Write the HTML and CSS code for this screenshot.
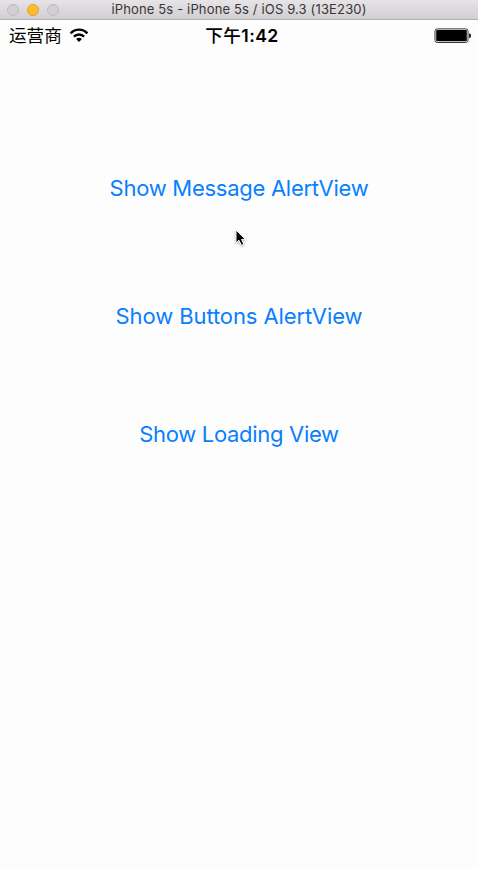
FILE: index.html
```html
<!DOCTYPE html>
<html lang="zh-CN">
<head>
<meta charset="utf-8">
<title>iPhone 5s</title>
<link rel="stylesheet" href="styles.css">
</head>
<body>
<header class="titlebar">
  <div class="lights"><i class="light"></i><i class="light light-min"></i><i class="light"></i></div>
  <div class="title">iPhone 5s - iPhone 5s / iOS 9.3 (13E230)</div>
</header>
<div class="status">
  <div class="carrier"><span>运营商</span>
    <svg class="wifi" width="20" height="16" viewBox="0 0 20 16">
      <g fill="none" stroke="#000" stroke-width="2.4">
        <path d="M1.6 5.4C6.3 .4 13.7 .4 18.4 5.4"/>
        <path d="M4.9 8.7C7.8 5.7 12.2 5.7 15.1 8.7"/>
      </g>
      <path d="M7.1 11Q10 8.6 12.9 11L10 14Z"/>
    </svg>
  </div>
  <div class="time"><span class="period">下午</span>1:42</div>
  <svg class="battery" width="38" height="16" viewBox="0 0 38 16">
    <rect x="1" y=".9" width="33" height="13.6" rx="2.2" fill="#fff" stroke="#333" stroke-width="1"/>
    <rect x="2.2" y="2.1" width="30.6" height="11.2" rx="1"/>
    <path d="M35.2 5.2Q37 5.6 37 7.7T35.2 10.2Z"/>
  </svg>
</div>
<main class="actions">
  <button class="action label-message">Show Message AlertView</button>
  <button class="action label-buttons">Show Buttons AlertView</button>
  <button class="action label-loading">Show Loading View</button>
</main>
<svg class="cursor" width="16" height="20" viewBox="0 0 16 20">
  <path class="cursor-shape" d="M2 2V15L5 12.3L7.4 17.3L9.8 16.2L7.5 11.4H11.5Z"/>
</svg>
</body>
</html>
```
FILE: styles.css
```css
* { box-sizing: border-box; }
body {
  margin: 0;
  width: 478px;
  height: 869px;
  overflow: hidden;
  background: #fdfdfd;
  font-family: Inter, "Noto Sans CJK SC", sans-serif;
}
.titlebar {
  height: 20px;
  display: grid;
  grid-template-columns: 60px 1fr 60px;
  align-items: center;
  background: linear-gradient(#e6e4e6, #d1cfd1);
  border-bottom: 1px solid #b3b0b3;
}
.lights { display: flex; gap: 8px; padding-left: 7px; }
.light {
  flex: none;
  width: 12px;
  height: 12px;
  border-radius: 50%;
  background: #d2d0d2;
  border: 1px solid #bcb9bc;
}
.light-min { background: #fdbe2e; border-color: #e0a028; }
.title {
  text-align: center;
  font-size: 13px;
  line-height: 18px;
  padding-bottom: 2px;
  letter-spacing: 0.15px;
  color: #383638;
  white-space: nowrap;
}
.status {
  height: 32px;
  display: grid;
  grid-template-columns: 1fr auto 1fr;
  align-items: center;
  padding: 0 6px 0 9px;
  font-size: 17.6px;
  line-height: 30px;
  color: #000;
}
.carrier { display: flex; align-items: center; gap: 7px; }
.time { font-weight: 600; letter-spacing: 0.4px; padding-left: 3px; }
.period { font-weight: 500; }
.battery { justify-self: end; }
.actions {
  display: flex;
  flex-direction: column;
  align-items: center;
  padding-top: 114px;
}
.action {
  display: block;
  height: 44px;
  margin: 0;
  padding: 0;
  border: 0;
  background: none;
  color: #087fff;
  font: 400 22px/44px Inter, sans-serif;
  white-space: nowrap;
}
.label-message { letter-spacing: -0.27px; }
.label-buttons { margin-top: 84px; letter-spacing: -0.1px; }
.label-loading { margin-top: 74px; letter-spacing: -0.3px; }
.cursor { position: absolute; left: 234px; top: 228px; filter: drop-shadow(0 1px 1px #0005); }
.cursor-shape { fill: #000; stroke: #fff; stroke-width: 1; }
```
